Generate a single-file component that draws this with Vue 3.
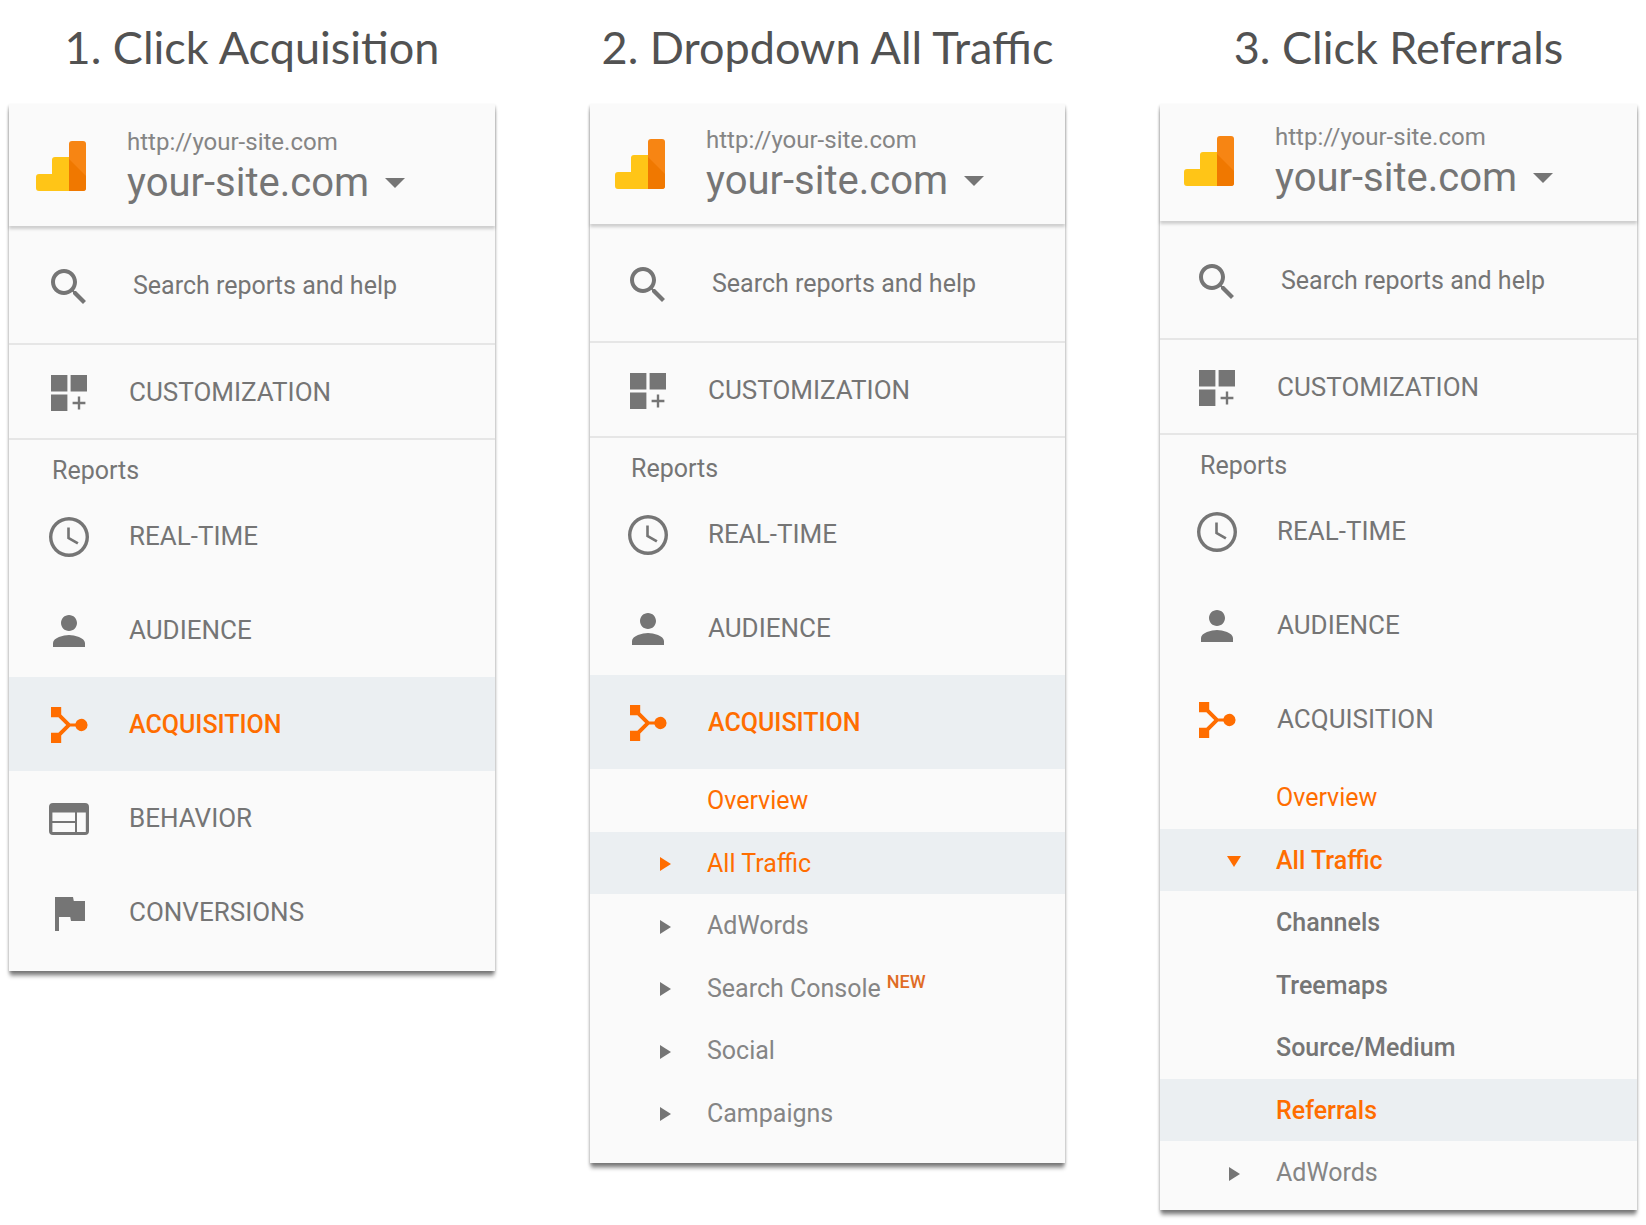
<template>
  <main class="steps">
    <section v-for="step in steps" :key="step.id" class="step" :class="`step-${step.id}`">
      <h2 class="step-title">{{ step.title }}</h2>

      <div class="panel">
        <header class="account">
          <svg class="logo" viewBox="0 0 50 50" aria-hidden="true">
            <path d="M19 16H35V50H3a3 3 0 0 1-3-3V36a3 3 0 0 1 3-3H16V19a3 3 0 0 1 3-3z" fill="#ffc517" />
            <path d="M33 3a3 3 0 0 1 3-3H47a3 3 0 0 1 3 3V47a3 3 0 0 1-3 3H33z" fill="#f78513" />
            <path d="M33 18L50 35V47a3 3 0 0 1-3 3H33z" fill="#f07800" />
          </svg>
          <div class="account-text">
            <span class="account-url">http://your-site.com</span>
            <button class="account-btn" type="button">
              your-site.com
              <svg class="caret" viewBox="0 0 20 10" aria-hidden="true">
                <path d="M0 0H20L10 10z" fill="currentColor" />
              </svg>
            </button>
          </div>
        </header>

        <div class="search">
          <svg class="icon" viewBox="0 0 24 24" aria-hidden="true">
            <path :d="icons.search" />
          </svg>
          <input
            class="search-input"
            type="search"
            placeholder="Search reports and help"
            aria-label="Search reports and help"
          />
        </div>

        <nav>
          <a class="item customization" href="#">
            <svg class="icon" viewBox="0 0 24 24" aria-hidden="true">
              <path :d="icons.customization" />
            </svg>
            CUSTOMIZATION
          </a>

          <h3 class="reports">Reports</h3>

          <a
            v-for="item in step.items"
            :key="item.label"
            class="item"
            :class="{ active: item.active, current: item.current }"
            href="#"
          >
            <svg class="icon" viewBox="0 0 24 24" aria-hidden="true">
              <path :d="icons[item.icon]" />
            </svg>
            {{ item.label }}
          </a>

          <div v-if="step.children" class="children">
            <a
              v-for="child in step.children"
              :key="child.label"
              class="child"
              :class="[child.weight, { orange: child.orange, highlight: child.highlight }]"
              href="#"
            >
              <span class="arrow">
                <svg v-if="child.arrow" viewBox="0 0 14 14" aria-hidden="true">
                  <path :d="child.arrow === 'down' ? 'M0 2H14L7 13z' : 'M2 0L13 7L2 14z'" />
                </svg>
              </span>
              <span>{{ child.label }}</span>
              <sup v-if="child.isNew" class="new">NEW</sup>
            </a>
          </div>
        </nav>
      </div>
    </section>
  </main>
</template>

<script setup>
const icons = {
  search:
    'M15.5 14h-.79l-.28-.27C15.41 12.59 16 11.11 16 9.5 16 5.91 13.09 3 9.5 3S3 5.91 3 9.5 5.91 16 9.5 16c1.61 0 3.09-.59 4.23-1.57l.27.28v.79l5 4.99L20.49 19l-4.99-5zm-6 0C7.01 14 5 11.99 5 9.5S7.01 5 9.5 5 14 7.01 14 9.5 11.99 14 9.5 14z',
  customization:
    'M3 3h8.200v8.200H3zM12.800 3H21v8.200h-8.200zM3 12.800h8.200V21H3zM16.400 13.800h1.200v2.600h2.600v1.200h-2.600v2.600h-1.200v-2.600h-2.600v-1.200h2.600z',
  clock:
    'M12 2a10 10 0 1 0 0 20 10 10 0 0 0 0-20zm0 18.300a8.300 8.300 0 1 1 0-16.600 8.300 8.300 0 0 1 0 16.600zM12.400 7.200h-1.300v5.700l5 2.800.7-1.100-4.400-2.500z',
  person:
    'M12 12c2.210 0 4-1.790 4-4s-1.790-4-4-4-4 1.790-4 4 1.790 4 4 4zm0 2c-2.670 0-8 1.340-8 4v2h16v-2c0-2.660-5.330-4-8-4z',
  acquisition:
    'M3 3h5.100v3.700l4.500 4.500h2.600a3.100 3.100 0 1 1 0 1.600h-2.600L8.100 17.300V21H3v-5.100h3.700l3.900-3.900-3.900-3.900H3z',
  behavior:
    'M20 4H4a2 2 0 0 0-2 2v12a2 2 0 0 0 2 2h16a2 2 0 0 0 2-2V6a2 2 0 0 0-2-2zM15 18.500H3.700V14H15zM15 13H3.700V8.800H15zM20.400 18.500H16V8.800h4.400z',
  flag: 'M14.400 6L14 4H5v17h2v-7h5.600l.4 2h7V6z'
}

const baseItems = [
  { label: 'REAL-TIME', icon: 'clock' },
  { label: 'AUDIENCE', icon: 'person' }
]

const steps = [
  {
    id: 1,
    title: '1. Click Acquisition',
    items: [
      ...baseItems,
      { label: 'ACQUISITION', icon: 'acquisition', active: true },
      { label: 'BEHAVIOR', icon: 'behavior' },
      { label: 'CONVERSIONS', icon: 'flag' }
    ]
  },
  {
    id: 2,
    title: '2. Dropdown All Traffic',
    items: [...baseItems, { label: 'ACQUISITION', icon: 'acquisition', active: true }],
    children: [
      { label: 'Overview', orange: true },
      { label: 'All Traffic', arrow: 'right', orange: true, highlight: true },
      { label: 'AdWords', arrow: 'right', weight: 'light' },
      { label: 'Search Console', arrow: 'right', weight: 'light', isNew: true },
      { label: 'Social', arrow: 'right', weight: 'light' },
      { label: 'Campaigns', arrow: 'right', weight: 'light' }
    ]
  },
  {
    id: 3,
    title: '3. Click Referrals',
    items: [...baseItems, { label: 'ACQUISITION', icon: 'acquisition', current: true }],
    children: [
      { label: 'Overview', orange: true },
      { label: 'All Traffic', arrow: 'down', orange: true, highlight: true, weight: 'medium' },
      { label: 'Channels', weight: 'medium' },
      { label: 'Treemaps', weight: 'medium' },
      { label: 'Source/Medium', weight: 'medium' },
      { label: 'Referrals', orange: true, highlight: true, weight: 'medium' },
      { label: 'AdWords', arrow: 'right', weight: 'light' }
    ]
  }
]
</script>

<style>
body {
  margin: 0;
  background: #fff;
}
</style>

<style scoped>
.steps {
  display: grid;
  grid-template-columns: 486fr 475fr 477fr;
  gap: 95px;
  align-items: start;
  padding: 0 9px 15px;
  font-family: Roboto, "Liberation Sans", sans-serif;
  font-size: 25px;
  color: #757575;
}

.step-1 {
  --inset: 27px;
  --header: 122px;
  --bottom: 12px;
}

.step-2 {
  --inset: 25px;
  --header: 120px;
  --bottom: 19px;
}

.step-3 {
  --inset: 24px;
  --header: 117px;
  --bottom: 6px;
}

.step-title {
  margin: 0;
  height: 104px;
  line-height: 94px;
  font-family: Lato, sans-serif;
  font-size: 45px;
  font-weight: 400;
  text-align: center;
  white-space: nowrap;
  color: #525252;
}

.panel {
  padding-bottom: var(--bottom);
  background: #fafafa;
  box-shadow: 0 6px 4px -1px rgba(0, 0, 0, 0.4), 0 2px 3px rgba(0, 0, 0, 0.25);
}

.account {
  display: flex;
  align-items: flex-end;
  gap: 41px;
  box-sizing: border-box;
  height: var(--header);
  margin-bottom: 2px;
  padding: 0 16px 18px var(--inset);
  box-shadow: 0 3px 3px rgba(0, 0, 0, 0.18);
}

.logo {
  flex: none;
  width: 50px;
  height: 50px;
  margin-bottom: 17px;
}

.account-text {
  display: flex;
  flex-direction: column;
  white-space: nowrap;
}

.account-url {
  font-size: 24px;
  line-height: 32px;
  color: #858585;
}

.account-btn {
  display: flex;
  align-items: center;
  gap: 16px;
  padding: 0;
  border: none;
  background: none;
  font: inherit;
  font-size: 40px;
  line-height: 50px;
  color: inherit;
  cursor: pointer;
}

.caret {
  width: 20px;
  height: 10px;
}

.search,
.item {
  display: flex;
  align-items: center;
  gap: 36px;
  box-sizing: border-box;
  padding-left: calc(var(--inset) + 9px);
}

.search {
  height: 117px;
  padding-right: 16px;
  border-bottom: 2px solid #e6e6e6;
}

.search-input {
  flex: 1;
  min-width: 0;
  padding: 0 0 0 4px;
  border: none;
  outline: none;
  background: none;
  font: inherit;
  color: inherit;
}

.search-input::placeholder {
  color: inherit;
  opacity: 1;
}

.icon {
  flex: none;
  width: 48px;
  height: 48px;
  margin-top: 2px;
  fill: currentColor;
  fill-rule: evenodd;
}

.item {
  height: 94px;
  font-size: 26px;
  color: inherit;
  text-decoration: none;
}

.customization {
  height: 95px;
  border-bottom: 2px solid #e6e6e6;
}

.active {
  background: #ebeff2;
  font-size: 25px;
  font-weight: 500;
  color: #ff6d00;
}

.current .icon {
  color: #ff6d00;
}

.reports {
  box-sizing: border-box;
  height: 49px;
  margin: 0;
  padding: 16px 0 0 calc(var(--inset) + 16px);
  font-size: 25px;
  font-weight: 400;
  line-height: 30px;
}

.child {
  display: flex;
  align-items: center;
  height: 62px;
  padding-left: calc(var(--inset) + 43px);
  color: inherit;
  text-decoration: none;
}

.child:nth-child(odd) {
  height: 63px;
}

.arrow {
  display: flex;
  width: 14px;
  height: 14px;
  margin: 2px 35px 0 0;
  fill: currentColor;
}

.light {
  color: #858585;
}

.light .arrow {
  color: #757575;
}

.medium {
  font-weight: 500;
}

.orange {
  color: #ff6d00;
}

.highlight {
  background: #ebeff2;
}

.new {
  margin: 0 0 12px 6px;
  font-size: 18px;
  font-weight: 500;
  line-height: 20px;
  color: #e06c25;
}
</style>
